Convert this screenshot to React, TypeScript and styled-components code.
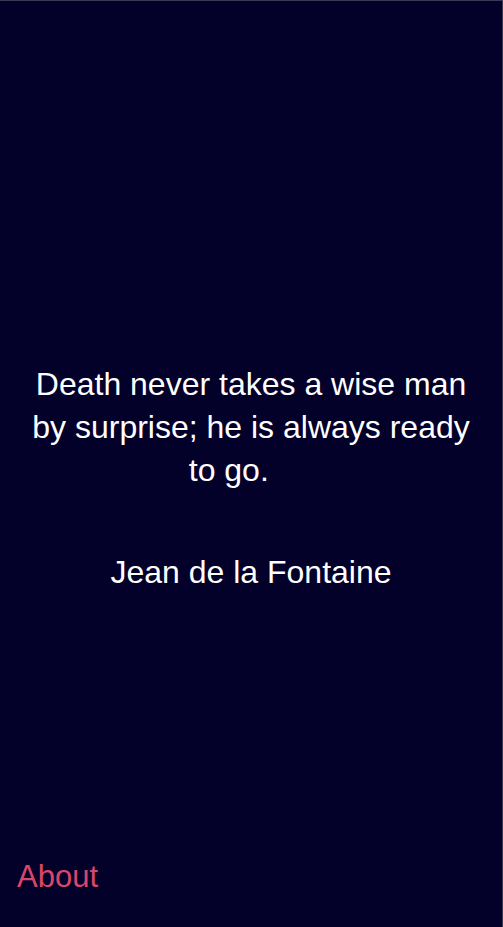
import React from 'react'
import styled, { createGlobalStyle } from 'styled-components'

const GlobalStyle = createGlobalStyle`
  html, body {
    margin: 0;
    padding: 0;
    background: #03002a;
  }
  body {
    font-family: 'Liberation Sans', Arial, sans-serif;
    -webkit-font-smoothing: antialiased;
  }
`

const quote = {
  text: 'Death never takes a wise man by surprise; he is always ready to go.',
  author: 'Jean de la Fontaine',
}

function App() {
  return (
    <>
      <GlobalStyle />
      <Screen>
        <Main>
          <Quote>
            {quote.text}
            {'\u00a0\u00a0\u00a0\u00a0\u00a0'}
          </Quote>
          <Author>{quote.author}</Author>
        </Main>
        <Footer>
          <AboutLink href="#">About</AboutLink>
        </Footer>
      </Screen>
    </>
  )
}

const Screen = styled.div`
  box-sizing: border-box;
  height: 100vh;
  display: flex;
  flex-direction: column;
  background: #03002a;
  border-top: 1px solid #3a3852;
  border-right: 1px solid #3a3852;
  color: #ffffff;
  overflow: hidden;
`

const Main = styled.main`
  flex: 1;
  display: flex;
  flex-direction: column;
  align-items: center;
  padding: 362px 20px 0;
`

const Quote = styled.p`
  margin: 0;
  max-width: 452px;
  font-size: 32px;
  line-height: 43px;
  text-align: center;
`

const Author = styled.p`
  margin: 59px 0 0;
  font-size: 32px;
  line-height: 43px;
  text-align: center;
`

const Footer = styled.footer`
  padding: 0 17px 29px;
`

const AboutLink = styled.a`
  display: inline-block;
  font-size: 31px;
  line-height: 43px;
  color: #d9466b;
  text-decoration: none;
`

export default App
